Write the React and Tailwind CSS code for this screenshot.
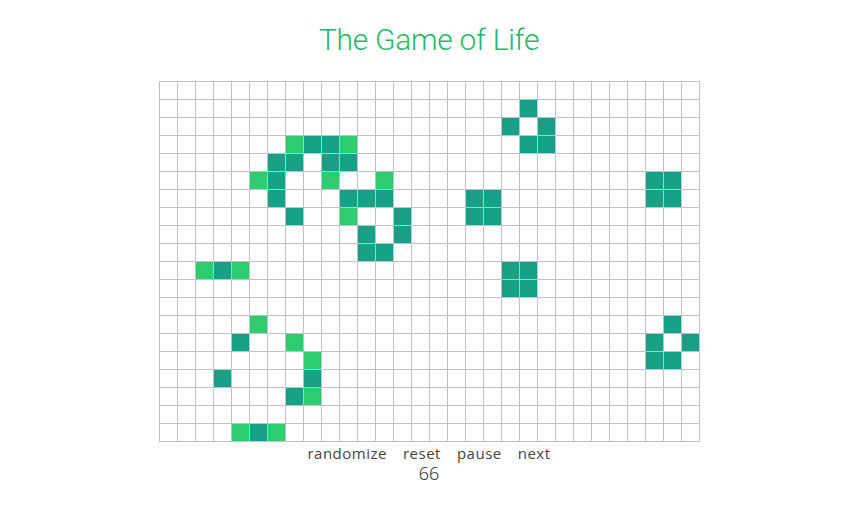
const DARK = [
  [1, 20], [2, 19], [2, 21], [3, 8], [3, 9], [3, 20], [3, 21],
  [4, 6], [4, 7], [4, 9], [4, 10],
  [5, 6], [5, 27], [5, 28],
  [6, 6], [6, 10], [6, 11], [6, 12], [6, 17], [6, 18], [6, 27], [6, 28],
  [7, 7], [7, 13], [7, 17], [7, 18],
  [8, 11], [8, 13], [9, 11], [9, 12],
  [10, 3], [10, 19], [10, 20], [11, 19], [11, 20],
  [13, 28], [14, 4], [14, 27], [14, 29], [15, 27], [15, 28],
  [16, 3], [16, 8], [17, 7], [19, 5],
]
const LIGHT = [
  [3, 7], [3, 10], [5, 5], [5, 9], [5, 12], [7, 10],
  [10, 2], [10, 4], [13, 5], [14, 7], [15, 8], [17, 8], [19, 4], [19, 6],
]

const key = (r, c) => r + '-' + c
const dark = new Set(DARK.map(([r, c]) => key(r, c)))
const light = new Set(LIGHT.map(([r, c]) => key(r, c)))

export default function App() {
  const cells = []
  for (let r = 0; r < 20; r++) {
    for (let c = 0; c < 30; c++) {
      const k = key(r, c)
      const color = dark.has(k) ? 'bg-[#16a085]' : light.has(k) ? 'bg-[#2ecc71]' : 'bg-white'
      cells.push(<div key={k} className={'h-[17px] w-[17px] ' + color} />)
    }
  }

  return (
    <div className="min-h-[522px] bg-white pl-2 flex flex-col items-center" style={{ fontFamily: '"Open Sans", sans-serif' }}>
      <h1 className="mt-[22px] mb-[23px] text-[30px] leading-[36px] font-light text-[#29b765] tracking-[-0.3px]" style={{ fontFamily: 'Roboto, sans-serif' }}>
        The Game of Life
      </h1>
      <div className="grid grid-cols-[repeat(30,17px)] gap-px p-px bg-[#bdc3c7]">
        {cells}
      </div>
      <div className="flex gap-[16px] text-[15px] leading-[22px] tracking-[0.5px] text-[#444]">
        <button>randomize</button>
        <button>reset</button>
        <button>pause</button>
        <button>next</button>
      </div>
      <div className="text-[18px] leading-[18px] font-light text-[#222]">66</div>
    </div>
  )
}
